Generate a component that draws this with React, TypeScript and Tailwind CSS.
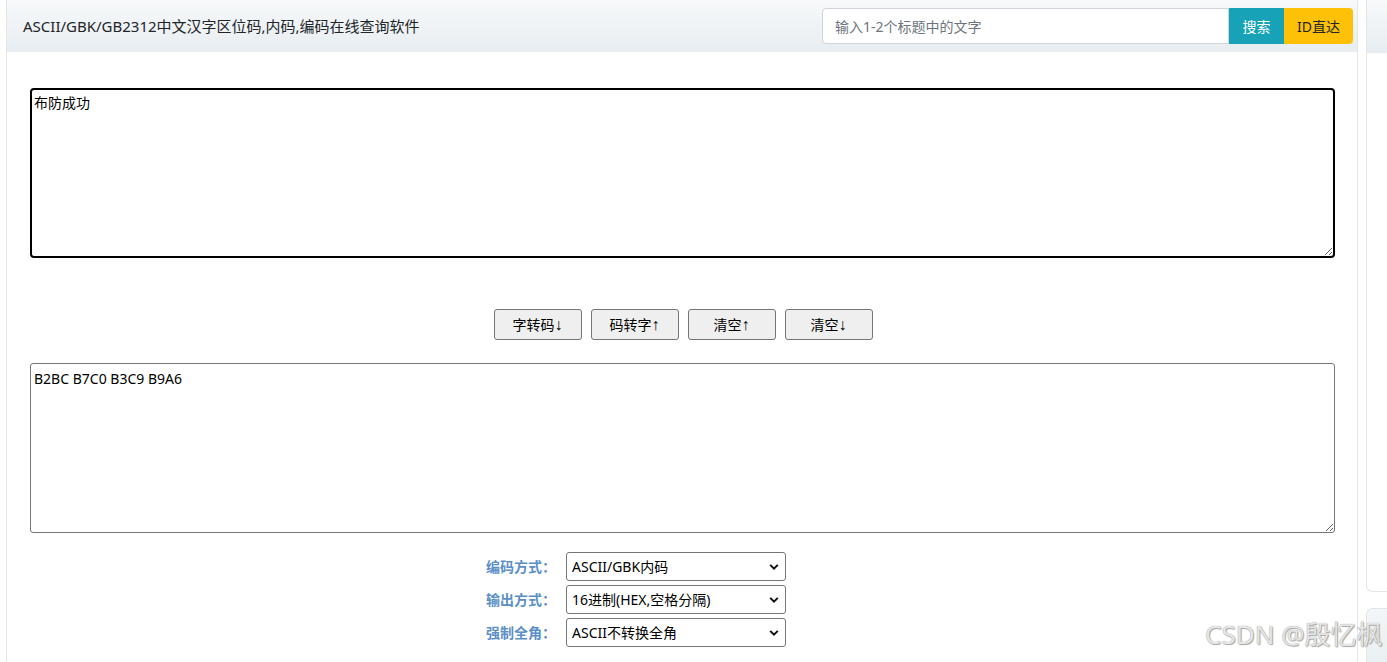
import { useState } from 'react';

const font = '[font-family:"Noto_Sans","Noto_Sans_CJK_SC",sans-serif]';

const buttons = [
  { text: '字转码', arrow: '↓' },
  { text: '码转字', arrow: '↑' },
  { text: '清空', arrow: '↑' },
  { text: '清空', arrow: '↓' },
];

const options = [
  { label: '编码方式：', value: 'ASCII/GBK内码' },
  { label: '输出方式：', value: '16进制(HEX,空格分隔)' },
  { label: '强制全角：', value: 'ASCII不转换全角' },
];

function Chevron() {
  return (
    <svg className="pointer-events-none absolute right-[7px] top-1/2 h-[7px] w-[10px] -translate-y-1/2" viewBox="0 0 10 7">
      <path d="M1.2 1.4 L5 5.2 L8.8 1.4" fill="none" stroke="#111" strokeWidth="2" />
    </svg>
  );
}

export default function App() {
  const [input, setInput] = useState('布防成功');
  const [output, setOutput] = useState('B2BC B7C0 B3C9 B9A6');

  return (
    <div className={`relative flex h-[662px] gap-2 overflow-hidden bg-white pl-[6px] text-[14px] text-[#212529] ${font}`}>
      <main className="h-[700px] w-[1352px] shrink-0 border-x border-[#e3e6e9]">
        <header className="flex h-[52px] items-center justify-between bg-gradient-to-b from-[#f7f9fa] to-[#e8edf1] pl-4 pr-1">
          <h1 className="text-[15px] font-normal">ASCII/GBK/GB2312中文汉字区位码,内码,编码在线查询软件</h1>
          <div className="flex h-[36px]">
            <input
              className="w-[407px] rounded-l-[4px] border border-[#ced4da] bg-white px-3 text-[14px] placeholder:text-[#6c757d] focus:outline-none"
              placeholder="输入1-2个标题中的文字"
            />
            <button className="w-[55px] bg-[#17a2b8] text-[14px] text-white" type="button">搜索</button>
            <button className="w-[69px] rounded-r-[4px] bg-[#ffc107] text-[14px] text-[#212529]" type="button">ID直达</button>
          </div>
        </header>

        <div className="pl-[23px] pr-[22px] pt-[36px]">
          <textarea
            className="block h-[170px] w-full resize-y rounded-[4px] border-2 border-black bg-white px-[2px] py-[1px] text-[14px] leading-[24px] text-black focus:outline-none"
            value={input}
            onChange={(e) => setInput(e.target.value)}
          />

          <div className="mt-[51px] flex justify-center gap-[9px] pl-[1px]">
            {buttons.map((b, i) => (
              <button
                key={i}
                className="h-[31px] w-[88px] rounded-[3px] border border-[#767676] bg-[#efefef] text-[14px] text-black"
                type="button"
              >
                {b.text}
                <span className='[font-family:"Liberation_Sans",sans-serif] text-[16px] leading-none'>{b.arrow}</span>
              </button>
            ))}
          </div>

          <textarea
            className="mt-[23px] block h-[170px] w-full resize-y rounded-[3px] border border-[#767676] bg-white px-[3px] py-[3px] text-[14px] leading-[24px] text-black focus:outline-none"
            value={output}
            onChange={(e) => setOutput(e.target.value)}
          />

          <div className="ml-[456px] mt-[19px] flex flex-col gap-[4px]">
            {options.map((opt) => (
              <div key={opt.label} className="flex items-center gap-[10px]">
                <span className="w-[70px] text-[14px] font-bold text-[#5b8fc8]">{opt.label}</span>
                <div className="relative">
                  <select
                    className="h-[29px] w-[220px] appearance-none rounded-[3px] border border-[#767676] bg-white pl-[5px] text-[14px] text-black focus:outline-none"
                    defaultValue={opt.value}
                  >
                    <option>{opt.value}</option>
                  </select>
                  <Chevron />
                </div>
              </div>
            ))}
          </div>
        </div>
      </main>

      <aside className="flex w-[40px] shrink-0 flex-col gap-[16px]">
        <div className="h-[592px] shrink-0 rounded-bl-[6px] border-b border-l border-[#e3e6e9]">
          <div className="h-[53px] bg-gradient-to-b from-[#f7f9fa] to-[#e8edf1]" />
        </div>
        <div className="h-[80px] shrink-0 rounded-tl-[6px] border-l border-t border-[#e3e6e9] bg-gradient-to-b from-[#f3f6f8] to-[#e6ecf0]" />
      </aside>

      <div className="pointer-events-none absolute bottom-[8px] left-[1205px] whitespace-nowrap text-[26px] text-[#e6e6e6] [text-shadow:0_0_1px_#8a8a8a,1px_1px_1px_#aaa]">
        CSDN @殷忆枫
      </div>
    </div>
  );
}
